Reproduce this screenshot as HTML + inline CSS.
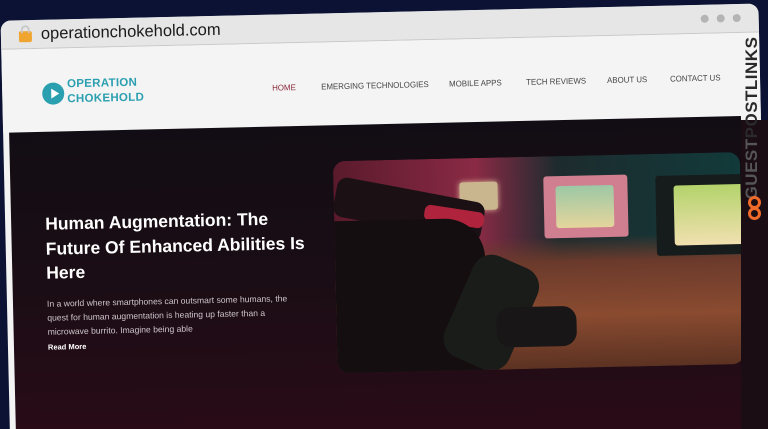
<!DOCTYPE html>
<html><head><meta charset="utf-8"><style>
*{margin:0;padding:0;box-sizing:border-box}
html{width:768px;height:429px;overflow:hidden}
body{width:768px;height:429px;overflow:hidden;background:#0b1233;font-family:"Liberation Sans",Arial,sans-serif;position:relative}
#win{position:absolute;left:5px;top:12px;width:758px;height:430px;transform:rotate(-1.3deg);transform-origin:384px 200px;border-radius:10px 10px 0 0;overflow:hidden;background:#f3f3f3}
#bar{position:absolute;left:0;top:0;width:100%;height:29px;background:#e6e6e6;border-bottom:1px solid #c9c9c9}
#url{position:absolute;left:40px;top:5px;font-size:16.5px;color:#1a1a1a}
#lock{position:absolute;left:18px;top:11px;width:13px;height:11px;background:#f0a531;border-radius:2px}
#lock:before{content:"";position:absolute;left:2px;top:-6px;width:5px;height:6px;border:2px solid #c9c9c9;border-bottom:none;border-radius:5px 5px 0 0}
.dot{position:absolute;top:10px;width:8px;height:8px;border-radius:50%;background:#b4b4b4}
#hdr{position:absolute;left:0;top:29px;width:100%;height:83px;background:#f4f4f4}
#logo{position:absolute;left:40px;top:34px;width:22px;height:22px;border-radius:50%;background:#2a9fb0}
#logo:after{content:"";position:absolute;left:9px;top:6px;border-left:8px solid #fff;border-top:5px solid transparent;border-bottom:5px solid transparent}
#lt{position:absolute;left:65px;top:29px;color:#2a9fb0;font-weight:bold;font-size:11.5px;line-height:15px;letter-spacing:.3px}
.nav{position:absolute;top:39px;font-size:8.3px;color:#444;transform:scaleX(.95);transform-origin:left}
#main{position:absolute;left:6px;top:112px;width:732px;height:318px;background:linear-gradient(180deg,#120d14 0%,#1b0d15 50%,#2a0b17 100%)}
h1{position:absolute;left:34px;top:80px;width:270px;color:#fff;font-size:17.5px;line-height:24.5px;font-weight:bold}
p{position:absolute;left:34px;top:165px;width:250px;color:#cfc6cc;font-size:8.6px;line-height:14px}
#rm{position:absolute;left:34px;top:211px;color:#fff;font-size:7.5px;font-weight:bold}
#img{position:absolute;left:323px;top:36px;width:407px;height:212px;border-radius:12px;overflow:hidden;
background:linear-gradient(180deg,transparent 0%,transparent 38%,#6b3a2c 50%,#8a4b30 75%,#5c3222 100%),linear-gradient(90deg,#5a1a2c 0%,#8a2a45 35%,#1d2b2e 55%,#123a3a 100%)}
.tv{position:absolute;border-radius:3px}
</style></head><body>
<div id="win">
 <div id="bar"><div id="lock"></div><div id="url">operationchokehold.com</div>
  <div class="dot" style="left:700px"></div><div class="dot" style="left:716px"></div><div class="dot" style="left:732px"></div></div>
 <div id="hdr">
  <div id="logo"></div><div id="lt">OPERATION<br>CHOKEHOLD</div>
  <div class="nav" style="left:270px;color:#8a2a3b">HOME</div>
  <div class="nav" style="left:319px">EMERGING TECHNOLOGIES</div>
  <div class="nav" style="left:447px">MOBILE APPS</div>
  <div class="nav" style="left:524px">TECH REVIEWS</div>
  <div class="nav" style="left:605px">ABOUT US</div>
  <div class="nav" style="left:668px">CONTACT US</div>
 </div>
 <div id="main">
  <h1>Human Augmentation: The Future Of Enhanced Abilities Is Here</h1>
  <p>In a world where smartphones can outsmart some humans, the quest for human augmentation is heating up faster than a microwave burrito. Imagine being able</p>
  <div id="rm">Read More</div>
  <div id="img">
   <div class="tv" style="left:126px;top:24px;width:38px;height:28px;background:#c9b58e;box-shadow:0 0 6px #e5c0a0"></div>
   <div class="tv" style="left:210px;top:20px;width:84px;height:62px;background:#d07f90"></div>
   <div class="tv" style="left:222px;top:30px;width:58px;height:42px;background:linear-gradient(#9cc8a5,#e5d59c)"></div>
   <div class="tv" style="left:322px;top:22px;width:90px;height:80px;background:#161c1c"></div>
   <div class="tv" style="left:340px;top:32px;width:70px;height:60px;background:linear-gradient(#b3d36b,#f1e0b0)"></div>
   <div style="position:absolute;left:0;top:30px;width:150px;height:40px;background:#1b1114;transform:rotate(12deg);border-radius:10px"></div>
   <div style="position:absolute;left:90px;top:50px;width:60px;height:16px;background:#b0233d;transform:rotate(10deg);border-radius:6px"></div>
   <div style="position:absolute;left:0;top:60px;width:150px;height:160px;background:#140e10;border-radius:0 40px 0 0"></div>
   <div style="position:absolute;left:120px;top:100px;width:70px;height:110px;background:#1a1c1a;transform:rotate(25deg);border-radius:20px"></div>
   <div style="position:absolute;left:160px;top:150px;width:80px;height:40px;background:#181616;border-radius:14px"></div>
  </div>
 </div>
</div>
<div style="position:absolute;left:741px;top:120px;width:27px;height:309px;background:#1a0d14"></div>
<div style="position:absolute;left:752px;top:118px;transform:translate(-50%,-50%) rotate(-90deg);white-space:nowrap;font-weight:bold;font-size:17px;letter-spacing:.5px"><span style="color:#555">GUEST</span><span style="color:#2a2a2a">POSTLINKS</span></div>
<div style="position:absolute;left:748px;top:196px;width:13px;height:13px;border:3px solid #f06a2a;border-radius:50%"></div>
<div style="position:absolute;left:748px;top:207px;width:13px;height:13px;border:3px solid #f06a2a;border-radius:50%"></div>
</body></html>
